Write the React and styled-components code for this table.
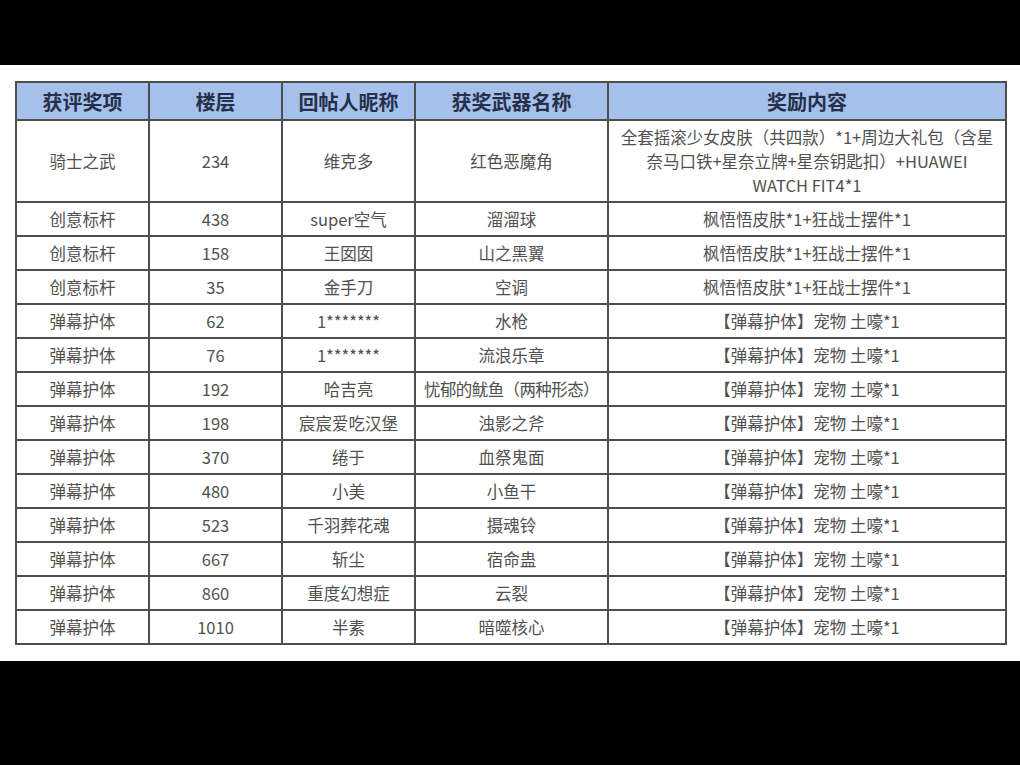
import React from "react";
import styled, { createGlobalStyle } from "styled-components";

const GlobalStyle = createGlobalStyle`
  html, body {
    margin: 0;
    padding: 0;
    background: #000;
  }
  body {
    font-family: "Noto Sans CJK SC", "Noto Sans", sans-serif;
  }
`;

const Screen = styled.div`
  width: 1020px;
  height: 765px;
  background: #000;
  padding-top: 65px;
  box-sizing: border-box;
`;

const Sheet = styled.div`
  height: 596px;
  background: #fff;
  padding: 16px 0 0 15px;
  box-sizing: border-box;
`;

const Table = styled.table`
  width: 990px;
  border-collapse: collapse;
  table-layout: fixed;
  border: 2px solid #4e4e4e;
`;

const HeadCell = styled.th`
  height: 36px;
  padding: 0;
  background: #a6c0ec;
  border: 2px solid #4e4e4e;
  color: #26304a;
  font-size: 20px;
  font-weight: 700;
  text-align: center;
  vertical-align: middle;
`;

const Row = styled.tr`
  height: ${(props) => (props.tall ? "82px" : "34px")};
`;

const Cell = styled.td`
  padding: 0 3px;
  border: 2px solid #4e4e4e;
  color: #505050;
  font-size: 16.5px;
  line-height: 24px;
  text-align: center;
  vertical-align: middle;
  white-space: nowrap;
  letter-spacing: ${(props) => (props.tight ? "-0.6px" : "0")};
`;

const columns = [
  { title: "获评奖项", width: 133 },
  { title: "楼层", width: 133 },
  { title: "回帖人昵称", width: 133 },
  { title: "获奖武器名称", width: 193 },
  { title: "奖励内容", width: 398 },
];

const petReward = "【弹幕护体】宠物 土嚎*1";
const skinReward = "枫悟悟皮肤*1+狂战士摆件*1";

const rows = [
  ["创意标杆", "438", "super空气", "溜溜球", skinReward],
  ["创意标杆", "158", "王囡囡", "山之黑翼", skinReward],
  ["创意标杆", "35", "金手刀", "空调", skinReward],
  ["弹幕护体", "62", "1*******", "水枪", petReward],
  ["弹幕护体", "76", "1*******", "流浪乐章", petReward],
  ["弹幕护体", "192", "哈吉亮", "忧郁的鱿鱼（两种形态）", petReward],
  ["弹幕护体", "198", "宸宸爱吃汉堡", "浊影之斧", petReward],
  ["弹幕护体", "370", "绻于", "血祭鬼面", petReward],
  ["弹幕护体", "480", "小美", "小鱼干", petReward],
  ["弹幕护体", "523", "千羽葬花魂", "摄魂铃", petReward],
  ["弹幕护体", "667", "斩尘", "宿命蛊", petReward],
  ["弹幕护体", "860", "重度幻想症", "云裂", petReward],
  ["弹幕护体", "1010", "半素", "暗噬核心", petReward],
];

const App = () => {
  return (
    <Screen>
      <GlobalStyle />
      <Sheet>
        <Table>
          <colgroup>
            {columns.map((col) => (
              <col key={col.title} style={{ width: col.width }} />
            ))}
          </colgroup>
          <thead>
            <tr>
              {columns.map((col) => (
                <HeadCell key={col.title}>{col.title}</HeadCell>
              ))}
            </tr>
          </thead>
          <tbody>
            <Row tall>
              <Cell>骑士之武</Cell>
              <Cell>234</Cell>
              <Cell>维克多</Cell>
              <Cell>红色恶魔角</Cell>
              <Cell>
                全套摇滚少女皮肤（共四款）*1+周边大礼包（含星
                <br />
                奈马口铁+星奈立牌+星奈钥匙扣）+HUAWEI
                <br />
                WATCH FIT4*1
              </Cell>
            </Row>
            {rows.map((row, i) => (
              <Row key={i}>
                {row.map((text, j) => (
                  <Cell key={j} tight={j === 3 && text.length > 8}>
                    {text}
                  </Cell>
                ))}
              </Row>
            ))}
          </tbody>
        </Table>
      </Sheet>
    </Screen>
  );
};

export default App;
